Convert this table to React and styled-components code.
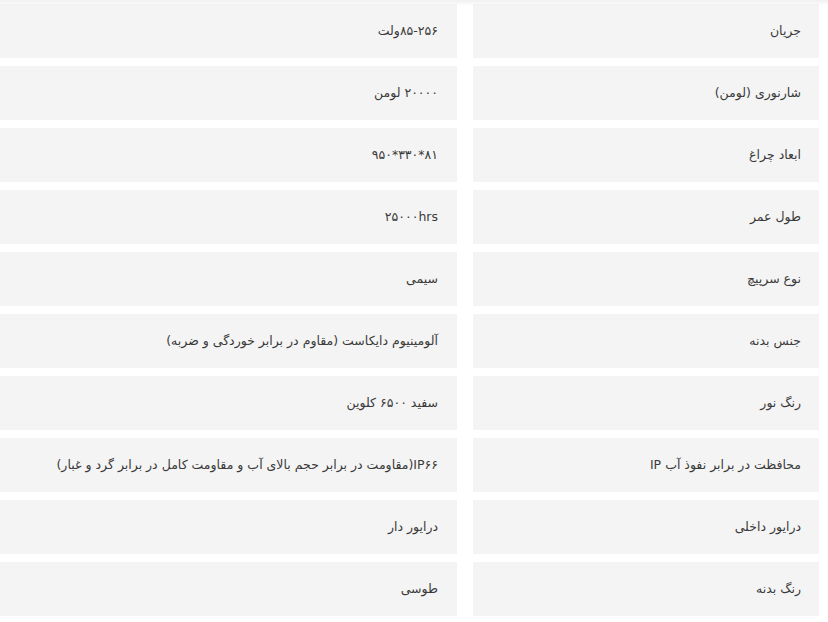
import React from "react";
import styled, { createGlobalStyle } from "styled-components";

const specs = [
  { label: "جریان", value: "۸۵-۲۵۶ولت" },
  { label: "شارنوری (لومن)", value: "۲۰۰۰۰ لومن" },
  { label: "ابعاد چراغ", value: "۸۱*۳۳۰*۹۵۰" },
  { label: "طول عمر", value: "۲۵۰۰۰hrs" },
  { label: "نوع سرپیچ", value: "سیمی" },
  { label: "جنس بدنه", value: "آلومینیوم دایکاست (مقاوم در برابر خوردگی و ضربه)" },
  { label: "رنگ نور", value: "سفید ۶۵۰۰ کلوین" },
  { label: "محافظت در برابر نفوذ آب IP", value: "IP۶۶(مقاومت در برابر حجم بالای آب و مقاومت کامل در برابر گرد و غبار)" },
  { label: "درایور داخلی", value: "درایور دار" },
  { label: "رنگ بدنه", value: "طوسی" },
];

const GlobalStyle = createGlobalStyle`
  html, body {
    margin: 0;
    padding: 0;
    background: #ffffff;
  }
  body {
    font-family: "DejaVu Sans", "Noto Sans", sans-serif;
  }
`;

const Page = styled.div`
  position: relative;
  direction: rtl;
  width: 828px;
  padding: 4px 9px 0 0;
  box-sizing: border-box;
`;

const TopShade = styled.div`
  position: absolute;
  top: 0;
  left: 0;
  right: 0;
  height: 6px;
  background: linear-gradient(to bottom, rgba(0, 0, 0, 0.06), rgba(0, 0, 0, 0));
  pointer-events: none;
`;

const Table = styled.div`
  display: flex;
  flex-direction: column;
  gap: 8px;
`;

const Row = styled.div`
  display: grid;
  grid-template-columns: 346px 1fr;
  column-gap: 16px;
  height: 54px;
`;

const Cell = styled.div`
  display: flex;
  align-items: center;
  background: #f4f4f4;
  color: #3a3a3a;
  font-size: 12.5px;
  padding: ${(p) => (p.$label ? "0 18px 1px 10px" : "0 19px 1px 10px")};
  white-space: nowrap;
`;

export default function App() {
  return (
    <>
      <GlobalStyle />
      <Page>
        <TopShade />
        <Table>
          {specs.map((s) => (
            <Row key={s.label}>
              <Cell $label>{s.label}</Cell>
              <Cell>{s.value}</Cell>
            </Row>
          ))}
        </Table>
      </Page>
    </>
  );
}
